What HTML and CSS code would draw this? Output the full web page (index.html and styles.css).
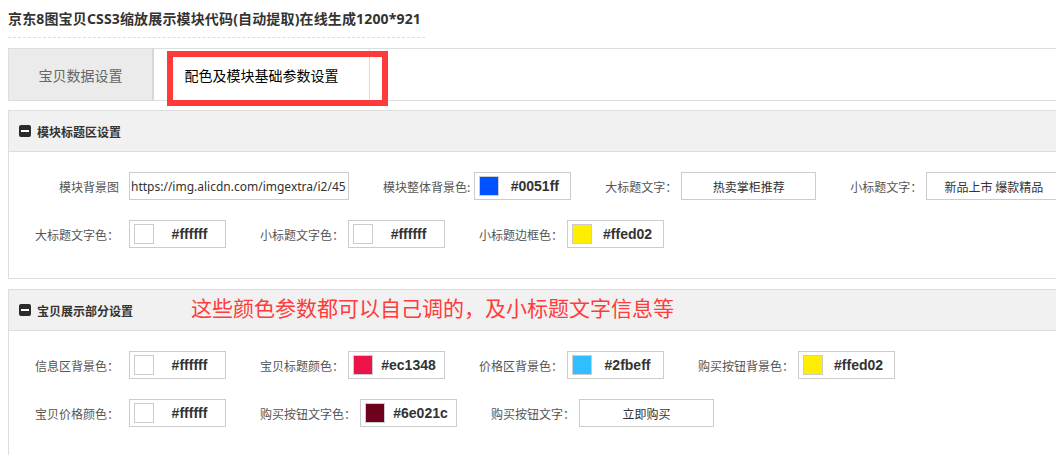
FILE: index.html
```html
<!DOCTYPE html>
<html lang="zh-CN">
<head>
<meta charset="utf-8">
<title>京东8图宝贝CSS3缩放展示模块代码</title>
<link rel="stylesheet" href="styles.css">
</head>
<body>
<div class="page">
  <h1 class="title">京东8图宝贝CSS3缩放展示模块代码(自动提取)在线生成1200*921</h1>

  <div class="tabs">
    <div class="tab tab-off">宝贝数据设置</div>
    <div class="tab tab-on">配色及模块基础参数设置</div>
    <div class="mark"></div>
  </div>

  <div class="section">
    <div class="sec-head">
      <span class="collapse"></span>
      <span class="sec-title">模块标题区设置</span>
    </div>
    <div class="sec-body">
      <div class="row">
        <label class="lbl first">模块背景图</label>
        <div class="inp inp-url">https://img.alicdn.com/imgextra/i2/45</div>
        <label class="lbl">模块整体背景色:</label>
        <div class="inp color"><span class="sw" style="background:#0051ff"></span><span class="hex">#0051ff</span></div>
        <label class="lbl">大标题文字：</label>
        <div class="inp inp-text">热卖掌柜推荐</div>
        <label class="lbl">小标题文字：</label>
        <div class="inp inp-text">新品上市 爆款精品</div>
      </div>
      <div class="row">
        <label class="lbl first">大标题文字色：</label>
        <div class="inp color"><span class="sw" style="background:#ffffff"></span><span class="hex">#ffffff</span></div>
        <label class="lbl">小标题文字色：</label>
        <div class="inp color"><span class="sw" style="background:#ffffff"></span><span class="hex">#ffffff</span></div>
        <label class="lbl">小标题边框色：</label>
        <div class="inp color"><span class="sw" style="background:#ffed02"></span><span class="hex">#ffed02</span></div>
      </div>
    </div>
  </div>

  <div class="section">
    <div class="sec-head">
      <span class="collapse"></span>
      <span class="sec-title">宝贝展示部分设置</span>
      <span class="note">这些颜色参数都可以自己调的，及小标题文字信息等</span>
    </div>
    <div class="sec-body">
      <div class="row">
        <label class="lbl first">信息区背景色：</label>
        <div class="inp color"><span class="sw" style="background:#ffffff"></span><span class="hex">#ffffff</span></div>
        <label class="lbl">宝贝标题颜色：</label>
        <div class="inp color"><span class="sw" style="background:#ec1348"></span><span class="hex">#ec1348</span></div>
        <label class="lbl">价格区背景色：</label>
        <div class="inp color"><span class="sw" style="background:#2fbeff"></span><span class="hex">#2fbeff</span></div>
        <label class="lbl">购买按钮背景色：</label>
        <div class="inp color"><span class="sw" style="background:#ffed02"></span><span class="hex">#ffed02</span></div>
      </div>
      <div class="row">
        <label class="lbl first">宝贝价格颜色：</label>
        <div class="inp color"><span class="sw" style="background:#ffffff"></span><span class="hex">#ffffff</span></div>
        <label class="lbl">购买按钮文字色：</label>
        <div class="inp color"><span class="sw" style="background:#6e021c"></span><span class="hex">#6e021c</span></div>
        <label class="lbl">购买按钮文字：</label>
        <div class="inp inp-text">立即购买</div>
      </div>
    </div>
  </div>
</div>
</body>
</html>
```

FILE: styles.css
```css
html, body {
  margin: 0;
  padding: 0;
  background: #fff;
  overflow: hidden;
}

body {
  font-family: "Noto Sans CJK SC", "Noto Sans", sans-serif;
  font-size: 12px;
  color: #555;
}

.page {
  width: 1120px;
  padding-left: 8px;
}

.title {
  width: 417px;
  margin: 0;
  padding: 9px 0 8px;
  font-family: "Noto Sans", "Noto Sans CJK SC", sans-serif;
  font-size: 14px;
  line-height: 20px;
  font-weight: bold;
  letter-spacing: 0.15px;
  color: #333;
  border-bottom: 1px dashed #ddd;
  white-space: nowrap;
}

.tabs {
  position: relative;
  display: flex;
  margin-top: 10px;
  height: 51px;
  border-top: 1px solid #ddd;
  border-bottom: 1px solid #ddd;
}

.tab {
  display: flex;
  align-items: center;
  justify-content: center;
  font-size: 14px;
  box-sizing: border-box;
}

.tab-off {
  width: 146px;
  background: #ebebeb;
  color: #666;
  border-left: 1px solid #ddd;
  border-right: 2px solid #d8d8d8;
}

.tab-on {
  width: 216px;
  background: #fff;
  color: #000;
  border-right: 1px solid #ddd;
}

.mark {
  position: absolute;
  left: 159px;
  top: 2px;
  width: 221px;
  height: 55px;
  box-sizing: border-box;
  border: 6px solid #ff3a3a;
}

.section {
  margin-top: 9px;
  border: 1px solid #ddd;
  border-right: none;
}

.section + .section {
  margin-top: 10px;
}

.sec-head {
  display: flex;
  align-items: center;
  height: 40px;
  padding-left: 10px;
  background: #f1f1f1;
  border-bottom: 1px solid #ddd;
}

.collapse {
  position: relative;
  width: 12px;
  height: 12px;
  border-radius: 2px;
  background: #2b2b2b;
  margin-right: 6px;
}

.collapse::after {
  content: "";
  position: absolute;
  left: 2px;
  top: 5px;
  width: 8px;
  height: 2px;
  background: #fff;
}

.sec-title {
  font-size: 12px;
  font-weight: bold;
  color: #333;
}

.note {
  margin-left: 58px;
  margin-bottom: 6px;
  font-size: 21px;
  line-height: 26px;
  color: #ff3b3b;
  white-space: nowrap;
}

.sec-body {
  display: flex;
  flex-direction: column;
  gap: 20px;
  padding: 20px 0 30px;
}

.row {
  display: flex;
  align-items: center;
  height: 28px;
}

.lbl {
  margin-left: 34px;
  margin-right: 4px;
  white-space: nowrap;
  color: #555;
}

.lbl.first {
  width: 110px;
  margin-left: 0;
  margin-right: 10px;
  text-align: right;
}

.inp {
  box-sizing: border-box;
  height: 28px;
  border: 1px solid #ccc;
  background: #fff;
  display: flex;
  align-items: center;
  overflow: hidden;
  white-space: nowrap;
  flex: none;
}

.inp-url {
  width: 220px;
  padding-left: 1px;
  font-family: "Noto Sans", sans-serif;
  font-size: 12px;
  color: #333;
}

.inp-text {
  width: 135px;
  justify-content: center;
  color: #333;
}

.color {
  width: 97px;
  padding-left: 4px;
}

.sw {
  box-sizing: border-box;
  width: 20px;
  height: 20px;
  border: 1px solid #ccc;
  flex: none;
}

.hex {
  flex: 1;
  text-align: center;
  font-family: "Liberation Sans", Arial, sans-serif;
  font-size: 14px;
  font-weight: bold;
  color: #333;
}
```
